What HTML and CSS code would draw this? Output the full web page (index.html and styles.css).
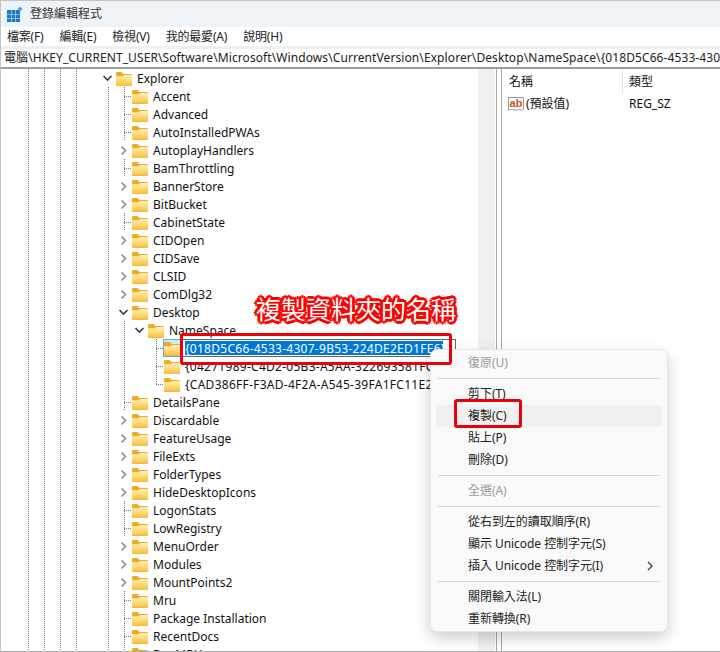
FILE: index.html
```html
<!DOCTYPE html>
<html lang="zh-Hant">
<head>
<meta charset="utf-8">
<title>登錄編輯程式</title>
<link rel="stylesheet" href="styles.css">
</head>
<body>
<svg class="defs" width="0" height="0" aria-hidden="true">
  <defs>
    <linearGradient id="fg" x1="0" y1="0" x2="0" y2="1">
      <stop offset="0" stop-color="#ffeeb8"/>
      <stop offset="0.55" stop-color="#fdd873"/>
      <stop offset="1" stop-color="#f5bd3f"/>
    </linearGradient>
    <symbol id="folder" viewBox="0 0 16 16">
      <path d="M0 3.5C0 2.7.6 2 1.4 2H5.5L7.6 4H14.6C15.4 4 16 4.7 16 5.5V14.5C16 15.3 15.4 16 14.6 16H1.4C.6 16 0 15.3 0 14.5Z" fill="#eeac26"/>
      <path d="M0 6.2H6.6L8 5H14.8C15.5 5 16 5.5 16 6.2V14.6C16 15.3 15.4 15.8 14.7 15.8H1.3C.6 15.8 0 15.3 0 14.6Z" fill="url(#fg)"/>
    </symbol>
    <symbol id="chev-r" viewBox="0 0 16 18">
      <path d="M5.5 5.5 9.5 9.5 5.5 13.5" fill="none" stroke="#8c8c8c" stroke-width="1.6"/>
    </symbol>
    <symbol id="chev-d" viewBox="0 0 16 18">
      <path d="M3.5 7 7.5 11 11.5 7" fill="none" stroke="#3a3a3a" stroke-width="1.6"/>
    </symbol>
  </defs>
</svg>

<div class="window">
  <header class="titlebar">
    <svg class="appicon" width="16" height="16" viewBox="0 0 16 16">
      <g fill="#1b7cc4">
        <rect x="0" y="4" width="4" height="4"/><rect x="4.5" y="4" width="4" height="4"/><rect x="9" y="4" width="4" height="4"/>
        <rect x="0" y="8.5" width="4" height="4"/><rect x="4.5" y="8.5" width="4" height="4"/><rect x="9" y="8.5" width="4" height="4"/>
        <rect x="0" y="13" width="4" height="3"/><rect x="4.5" y="13" width="4" height="3"/><rect x="9" y="13" width="4" height="3"/>
      </g>
      <path d="M13 .5 15.6 3 13 5.5 10.5 3Z" fill="#3fa9e0"/>
    </svg>
    <span>登錄編輯程式</span>
  </header>

  <nav class="menubar">
    <span>檔案(F)</span><span>編輯(E)</span><span>檢視(V)</span><span>我的最愛(A)</span><span>說明(H)</span>
  </nav>

  <div class="address">電腦\HKEY_CURRENT_USER\Software\Microsoft\Windows\CurrentVersion\Explorer\Desktop\NameSpace\{018D5C66-4533-4307-9B53-224DE2ED1FE6}</div>

  <main class="panes">
    <section class="tree">
      <div class="row l0"><span class="exp"><svg width="16" height="18"><use href="#chev-d"/></svg></span><svg class="fld" width="16" height="16"><use href="#folder"/></svg><span class="lbl">Explorer</span></div>
      <div class="kids k-a">
        <div class="row l1"><span class="exp leaf"></span><svg class="fld" width="16" height="16"><use href="#folder"/></svg><span class="lbl">Accent</span></div>
        <div class="row l1"><span class="exp leaf"></span><svg class="fld" width="16" height="16"><use href="#folder"/></svg><span class="lbl">Advanced</span></div>
        <div class="row l1"><span class="exp leaf"></span><svg class="fld" width="16" height="16"><use href="#folder"/></svg><span class="lbl">AutoInstalledPWAs</span></div>
        <div class="row l1"><span class="exp"><svg width="16" height="18"><use href="#chev-r"/></svg></span><svg class="fld" width="16" height="16"><use href="#folder"/></svg><span class="lbl">AutoplayHandlers</span></div>
        <div class="row l1"><span class="exp leaf"></span><svg class="fld" width="16" height="16"><use href="#folder"/></svg><span class="lbl">BamThrottling</span></div>
        <div class="row l1"><span class="exp"><svg width="16" height="18"><use href="#chev-r"/></svg></span><svg class="fld" width="16" height="16"><use href="#folder"/></svg><span class="lbl">BannerStore</span></div>
        <div class="row l1"><span class="exp"><svg width="16" height="18"><use href="#chev-r"/></svg></span><svg class="fld" width="16" height="16"><use href="#folder"/></svg><span class="lbl">BitBucket</span></div>
        <div class="row l1"><span class="exp leaf"></span><svg class="fld" width="16" height="16"><use href="#folder"/></svg><span class="lbl">CabinetState</span></div>
        <div class="row l1"><span class="exp"><svg width="16" height="18"><use href="#chev-r"/></svg></span><svg class="fld" width="16" height="16"><use href="#folder"/></svg><span class="lbl">CIDOpen</span></div>
        <div class="row l1"><span class="exp"><svg width="16" height="18"><use href="#chev-r"/></svg></span><svg class="fld" width="16" height="16"><use href="#folder"/></svg><span class="lbl">CIDSave</span></div>
        <div class="row l1"><span class="exp"><svg width="16" height="18"><use href="#chev-r"/></svg></span><svg class="fld" width="16" height="16"><use href="#folder"/></svg><span class="lbl">CLSID</span></div>
        <div class="row l1"><span class="exp"><svg width="16" height="18"><use href="#chev-r"/></svg></span><svg class="fld" width="16" height="16"><use href="#folder"/></svg><span class="lbl">ComDlg32</span></div>
        <div class="row l1"><span class="exp"><svg width="16" height="18"><use href="#chev-d"/></svg></span><svg class="fld" width="16" height="16"><use href="#folder"/></svg><span class="lbl">Desktop</span></div>
        <div class="row l2"><span class="exp"><svg width="16" height="18"><use href="#chev-d"/></svg></span><svg class="fld" width="16" height="16"><use href="#folder"/></svg><span class="lbl">NameSpace</span></div>
        <div class="kids k-c">
          <div class="row l3 selected"><span class="exp leaf"></span><span class="fld-sel"><svg class="fld" width="16" height="16"><use href="#folder"/></svg></span><span class="edit"><span class="sel guid">{018D5C66-4533-4307-9B53-224DE2ED1FE6}</span></span></div>
          <div class="row l3"><span class="exp leaf"></span><svg class="fld" width="16" height="16"><use href="#folder"/></svg><span class="lbl guid">{04271989-C4D2-05B3-A5AA-322693581FC4}</span></div>
          <div class="row l3"><span class="exp leaf"></span><svg class="fld" width="16" height="16"><use href="#folder"/></svg><span class="lbl guid">{CAD386FF-F3AD-4F2A-A545-39FA1FC11E2A}</span></div>
        </div>
        <div class="row l1"><span class="exp leaf"></span><svg class="fld" width="16" height="16"><use href="#folder"/></svg><span class="lbl">DetailsPane</span></div>
        <div class="row l1"><span class="exp"><svg width="16" height="18"><use href="#chev-r"/></svg></span><svg class="fld" width="16" height="16"><use href="#folder"/></svg><span class="lbl">Discardable</span></div>
        <div class="row l1"><span class="exp"><svg width="16" height="18"><use href="#chev-r"/></svg></span><svg class="fld" width="16" height="16"><use href="#folder"/></svg><span class="lbl">FeatureUsage</span></div>
        <div class="row l1"><span class="exp"><svg width="16" height="18"><use href="#chev-r"/></svg></span><svg class="fld" width="16" height="16"><use href="#folder"/></svg><span class="lbl">FileExts</span></div>
        <div class="row l1"><span class="exp"><svg width="16" height="18"><use href="#chev-r"/></svg></span><svg class="fld" width="16" height="16"><use href="#folder"/></svg><span class="lbl">FolderTypes</span></div>
        <div class="row l1"><span class="exp"><svg width="16" height="18"><use href="#chev-r"/></svg></span><svg class="fld" width="16" height="16"><use href="#folder"/></svg><span class="lbl">HideDesktopIcons</span></div>
        <div class="row l1"><span class="exp leaf"></span><svg class="fld" width="16" height="16"><use href="#folder"/></svg><span class="lbl">LogonStats</span></div>
        <div class="row l1"><span class="exp leaf"></span><svg class="fld" width="16" height="16"><use href="#folder"/></svg><span class="lbl">LowRegistry</span></div>
        <div class="row l1"><span class="exp"><svg width="16" height="18"><use href="#chev-r"/></svg></span><svg class="fld" width="16" height="16"><use href="#folder"/></svg><span class="lbl">MenuOrder</span></div>
        <div class="row l1"><span class="exp"><svg width="16" height="18"><use href="#chev-r"/></svg></span><svg class="fld" width="16" height="16"><use href="#folder"/></svg><span class="lbl">Modules</span></div>
        <div class="row l1"><span class="exp"><svg width="16" height="18"><use href="#chev-r"/></svg></span><svg class="fld" width="16" height="16"><use href="#folder"/></svg><span class="lbl">MountPoints2</span></div>
        <div class="row l1"><span class="exp leaf"></span><svg class="fld" width="16" height="16"><use href="#folder"/></svg><span class="lbl">Mru</span></div>
        <div class="row l1"><span class="exp leaf"></span><svg class="fld" width="16" height="16"><use href="#folder"/></svg><span class="lbl">Package Installation</span></div>
        <div class="row l1"><span class="exp leaf"></span><svg class="fld" width="16" height="16"><use href="#folder"/></svg><span class="lbl">RecentDocs</span></div>
        <div class="row l1"><span class="exp leaf"></span><svg class="fld" width="16" height="16"><use href="#folder"/></svg><span class="lbl">RunMRU</span></div>
      </div>
    </section>
    <div class="scrollbar"></div>
    <div class="splitter"></div>
    <section class="list">
      <div class="list-head"><span class="col-name">名稱</span><span class="col-type">類型</span></div>
      <div class="list-row">
        <span class="col-name name-cell">
          <svg class="abicon" width="16" height="16" viewBox="0 0 16 16">
            <path d="M.5 1.5H15.5V13.5C14 15.2 12.5 12.5 10.5 13.5 8.5 15.5 4 12 .5 14.5Z" fill="#fff" stroke="#9a9a9a"/>
            <text class="abtext" x="8" y="10.5" text-anchor="middle">ab</text>
          </svg>
          <span>(預設值)</span>
        </span>
        <span class="col-type">REG_SZ</span>
      </div>
    </section>
  </main>

  <div class="ctx">
    <div class="item off">復原(U)</div>
    <div class="sep"></div>
    <div class="item">剪下(T)</div>
    <div class="item hot">複製(C)</div>
    <div class="item">貼上(P)</div>
    <div class="item">刪除(D)</div>
    <div class="sep"></div>
    <div class="item off">全選(A)</div>
    <div class="sep"></div>
    <div class="item">從右到左的讀取順序(R)</div>
    <div class="item">顯示 Unicode 控制字元(S)</div>
    <div class="item sub">插入 Unicode 控制字元(I)<svg class="subarrow" width="6" height="10" viewBox="0 0 6 10"><path d="M1 1 5 5 1 9" fill="none" stroke="#444" stroke-width="1.4"/></svg></div>
    <div class="sep"></div>
    <div class="item">關閉輸入法(L)</div>
    <div class="item">重新轉換(R)</div>
  </div>

  <div class="callout">複製資料夾的名稱</div>
  <div class="redbox box-name"></div>
  <div class="redbox box-copy"></div>
</div>
</body>
</html>
```

FILE: styles.css
```css
* { box-sizing: border-box; }
html, body { margin: 0; padding: 0; background: #fff; }
.defs { position: absolute; }
.window {
  position: relative;
  width: 720px;
  height: 652px;
  overflow: hidden;
  display: flex;
  flex-direction: column;
  border-top: 1px solid #c4c4c4;
  border-left: 1px solid #c4c4c4;
  border-bottom: 1px solid #b0b0b0;
  font: 12px/18px "Noto Sans", "Noto Sans CJK TC", sans-serif;
  color: #111;
}
.titlebar {
  height: 26px;
  background: #eef3f8;
  display: flex;
  align-items: center;
  gap: 7px;
  padding-left: 6px;
  color: #333;
}
.menubar {
  height: 18px;
  margin-top: 1px;
  display: flex;
  gap: 16px;
  padding-left: 6px;
  background: #fff;
  color: #222;
  letter-spacing: -0.2px;
}
.address {
  height: 21px;
  padding-left: 3px;
  white-space: nowrap;
  overflow: hidden;
  border-top: 3px solid #f0f0f0;
  color: #222;
  line-height: 18px;
  letter-spacing: 0.09px;
}
.panes {
  flex: 1;
  min-height: 0;
  display: flex;
  border-top: 2px solid #9c9c9c;
}
.tree {
  width: 477px;
  overflow: hidden;
  background-image:
    linear-gradient(#777 50%, transparent 50%),
    linear-gradient(#777 50%, transparent 50%),
    linear-gradient(#777 50%, transparent 50%),
    linear-gradient(#777 50%, transparent 50%),
    linear-gradient(#777 50%, transparent 50%);
  background-size: 1px 2px;
  background-repeat: repeat-y;
  background-position: 27px 0, 43px 0, 59px 0, 75px 0, 107px 0;
}
.row {
  position: relative;
  height: 18px;
  display: flex;
  align-items: center;
  white-space: nowrap;
}
.l0 { padding-left: 99px; }
.l1 { padding-left: 115px; }
.l2 { padding-left: 131px; }
.l3 { padding-left: 147px; }
.exp {
  width: 16px;
  height: 18px;
  flex: none;
  display: block;
}
.exp svg { display: block; background: #fff; }
.leaf::before {
  content: "";
  display: block;
  width: 8px;
  height: 1px;
  margin: 9px 0 0 8px;
  background: repeating-linear-gradient(to right, #777 0 1px, transparent 1px 2px);
}
.fld { flex: none; display: block; }
.lbl { margin-left: 5px; padding-top: 2px; }
.guid { letter-spacing: 0.27px; }
.kids { position: relative; }
.kids::before {
  content: "";
  position: absolute;
  top: 0;
  width: 1px;
  background: repeating-linear-gradient(to bottom, #777 0 1px, transparent 1px 2px);
}
.k-a::before { left: 123px; bottom: 0; }
.k-c::before { left: 155px; top: 0; bottom: 9px; }
.fld-sel {
  flex: none;
  display: block;
  background: #cce8ff;
  box-shadow: 0 0 0 1px #5aa9e6;
}
.edit {
  margin-left: 2px;
  width: 274px;
  height: 18px;
  border: 1px solid #666;
  background: #fff;
  padding: 1px 0 1px 2px;
  display: block;
  line-height: 16px;
}
.sel {
  display: block;
  width: 258px;
  height: 14px;
  background: #0078d7;
  color: #fff;
}
.scrollbar { width: 17px; background: #f0f0f0; }
.splitter {
  width: 6px;
  margin-left: 1px;
  border-left: 1px solid #a8a8a8;
  border-right: 1px solid #a8a8a8;
}
.list { flex: 1; min-width: 0; }
.list-head, .list-row { display: flex; }
.list-head { height: 25px; align-items: center; }
.list-row { height: 18px; align-items: center; padding-top: 1px; }
.col-name { width: 120px; padding-left: 7px; }
.list-head .col-type {
  border-left: 1px solid #e4e4e4;
  padding-left: 6px;
  height: 25px;
  line-height: 25px;
}
.list-row .col-type { padding-left: 7px; }
.name-cell { display: flex; align-items: center; gap: 2px; padding-left: 6px; }
.abicon { flex: none; }
.abtext { font: bold 11px "Liberation Sans", sans-serif; fill: #d4472a; }
.ctx {
  position: absolute;
  left: 429px;
  top: 348px;
  width: 238px;
  height: 283px;
  padding: 2px 5px;
  background: #f9f9f9;
  border: 1px solid #e6e6e6;
  border-radius: 7px;
  box-shadow: 0 6px 16px rgba(0, 0, 0, 0.2);
  color: #222;
}
.item {
  height: 22px;
  line-height: 22px;
  padding-left: 32px;
  border-radius: 4px;
  white-space: nowrap;
  position: relative;
  letter-spacing: -0.05px;
}
.off { color: #9b9b9b; }
.hot { background: #f0f0f0; }
.sep { height: 9px; margin: 0 2px; position: relative; }
.sep::after {
  content: "";
  position: absolute;
  left: 0;
  right: 0;
  top: 4px;
  height: 1px;
  background: #d6d6d6;
}
.subarrow { position: absolute; right: 9px; top: 6px; }
.callout {
  position: absolute;
  left: 255px;
  top: 292px;
  font: 400 25px/30px "Noto Sans CJK TC", sans-serif;
  color: #fff;
  white-space: nowrap;
  text-shadow:
    2px 0 0 #f00, -2px 0 0 #f00, 0 2px 0 #f00, 0 -2px 0 #f00,
    2px 2px 0 #f00, -2px 2px 0 #f00, 2px -2px 0 #f00, -2px -2px 0 #f00,
    3px 0 0 #f00, -3px 0 0 #f00, 0 3px 0 #f00, 0 -3px 0 #f00;
}
.redbox {
  position: absolute;
  border: 3px solid #e8000c;
  border-radius: 3px;
}
.box-name { left: 179px; top: 332px; width: 272px; height: 32px; }
.box-copy { left: 453px; top: 398px; width: 68px; height: 29px; }
```
